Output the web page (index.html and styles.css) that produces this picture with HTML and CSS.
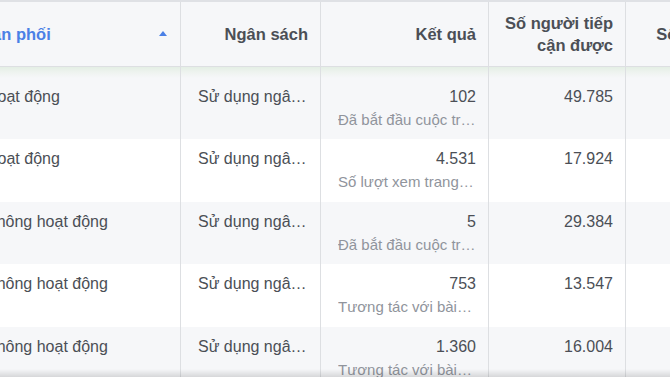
FILE: index.html
```html
<!DOCTYPE html>
<html lang="vi">
<head>
<meta charset="utf-8">
<title>Bảng quảng cáo</title>
<link rel="stylesheet" href="styles.css">
</head>
<body>
<div class="viewport">
  <div class="grid">
    <div class="row head">
      <div class="cell c1 sorted"><span>Phân phối</span><span class="arrow"></span></div>
      <div class="cell c2">Ngân sách</div>
      <div class="cell c3">Kết quả</div>
      <div class="cell c4">Số người tiếp cận được</div>
      <div class="cell c5">Số lần hiển thị</div>
    </div>
    <div class="row odd first">
      <div class="cell c1"><div class="main">Hoạt động</div></div>
      <div class="cell c2"><div class="main">Sử dụng ngân sách nhóm quảng cáo</div></div>
      <div class="cell c3"><div class="main">102</div><div class="sub">Đã bắt đầu cuộc trò chuyện qua tin nhắn</div></div>
      <div class="cell c4"><div class="main">49.785</div></div>
      <div class="cell c5"><div class="main">98.412</div></div>
    </div>
    <div class="row even">
      <div class="cell c1"><div class="main">Hoạt động</div></div>
      <div class="cell c2"><div class="main">Sử dụng ngân sách nhóm quảng cáo</div></div>
      <div class="cell c3"><div class="main">4.531</div><div class="sub">Số lượt xem trang đích</div></div>
      <div class="cell c4"><div class="main">17.924</div></div>
      <div class="cell c5"><div class="main">31.207</div></div>
    </div>
    <div class="row odd">
      <div class="cell c1"><div class="main">Không hoạt động</div></div>
      <div class="cell c2"><div class="main">Sử dụng ngân sách nhóm quảng cáo</div></div>
      <div class="cell c3"><div class="main">5</div><div class="sub">Đã bắt đầu cuộc trò chuyện qua tin nhắn</div></div>
      <div class="cell c4"><div class="main">29.384</div></div>
      <div class="cell c5"><div class="main">52.119</div></div>
    </div>
    <div class="row even">
      <div class="cell c1"><div class="main">Không hoạt động</div></div>
      <div class="cell c2"><div class="main">Sử dụng ngân sách nhóm quảng cáo</div></div>
      <div class="cell c3"><div class="main">753</div><div class="sub">Tương tác với bài viết</div></div>
      <div class="cell c4"><div class="main">13.547</div></div>
      <div class="cell c5"><div class="main">20.836</div></div>
    </div>
    <div class="row odd">
      <div class="cell c1"><div class="main">Không hoạt động</div></div>
      <div class="cell c2"><div class="main">Sử dụng ngân sách nhóm quảng cáo</div></div>
      <div class="cell c3"><div class="main">1.360</div><div class="sub">Tương tác với bài viết</div></div>
      <div class="cell c4"><div class="main">16.004</div></div>
      <div class="cell c5"><div class="main">24.551</div></div>
    </div>
  </div>
  <div class="bottom-shadow"></div>
</div>
</body>
</html>
```
FILE: styles.css
```css
html, body {
  margin: 0;
  padding: 0;
  background: #ffffff;
}

.viewport {
  position: relative;
  width: 670px;
  height: 377px;
  overflow: hidden;
  font-family: "Liberation Sans", Arial, sans-serif;
  color: #4b4f56;
}

.grid {
  display: flex;
  flex-direction: column;
  width: max-content;
  margin-left: -41px;
}

.row {
  display: flex;
  height: 62.5px;
}

.cell {
  flex: none;
  box-sizing: border-box;
  border-right: 1px solid #dddfe2;
  padding: 10px 12px 0 17px;
  text-align: right;
  min-width: 0;
}

.c1 { width: 222px; }
.c2 { width: 140px; }
.c3 { width: 168px; }
.c4 { width: 137px; }
.c5 { width: 156px; }

/* header */
.head {
  height: 67px;
  background: #f6f7f9;
  border-top: 2px solid #dfe1e5;
  border-bottom: 1px solid #dddfe2;
  box-sizing: border-box;
}

.head .cell {
  display: flex;
  align-items: center;
  justify-content: flex-end;
  padding: 0 12px;
  font-size: 16.5px;
  font-weight: 700;
  line-height: 22px;
  color: #4b4f56;
}

.head .c1 {
  justify-content: space-between;
  padding: 0 13px 0 12px;
  text-align: left;
}

.head .sorted {
  color: #4a80e6;
}

.arrow {
  width: 0;
  height: 0;
  border-left: 4.5px solid transparent;
  border-right: 4.5px solid transparent;
  border-bottom: 5px solid #4a80e6;
  margin-bottom: 1px;
}

/* body rows */
.odd { background: #f6f7f9; }
.even { background: #ffffff; }

.first {
  height: 72px;
  background: linear-gradient(to bottom, #e4efe5 0px, #eef3ef 5px, #f6f7f9 11px);
}

.first .cell {
  padding-top: 20px;
}

.main {
  font-size: 16px;
  line-height: 20px;
  white-space: nowrap;
  overflow: hidden;
  text-overflow: ellipsis;
  color: #4b4f56;
}

.sub {
  margin-top: 3px;
  font-size: 15px;
  line-height: 20px;
  white-space: nowrap;
  overflow: hidden;
  text-overflow: ellipsis;
  color: #90949c;
}

.row:not(.head) .c1 {
  text-align: left;
  padding-left: 27px;
}

.row:not(.head) .c2 {
  text-align: left;
}

.bottom-shadow {
  position: absolute;
  left: 0;
  right: 0;
  bottom: 0;
  height: 8px;
  background: linear-gradient(to bottom, rgba(0, 0, 0, 0), rgba(0, 0, 0, 0.13));
  pointer-events: none;
}
```
